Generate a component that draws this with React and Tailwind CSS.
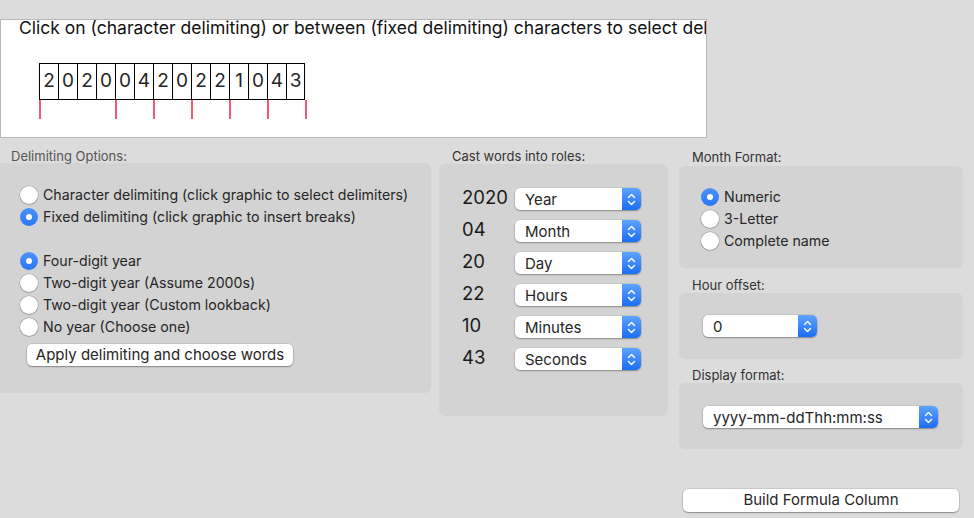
import React from "react";

const digits = "20200420221043".split("");
const ticks = [0, 4, 6, 8, 10, 12, 14];

function Radio({ on }) {
  if (on)
    return (
      <span className="flex h-[18px] w-[18px] shrink-0 items-center justify-center rounded-full bg-gradient-to-b from-[#4b93fb] to-[#2a76f4]">
        <span className="h-[6px] w-[6px] rounded-full bg-white" />
      </span>
    );
  return (
    <span className="h-[18px] w-[18px] shrink-0 rounded-full bg-white shadow-[0_0_0_0.5px_rgba(0,0,0,0.22),0_0.5px_1.5px_rgba(0,0,0,0.25)]" />
  );
}

function RadioRow({ on, children }) {
  return (
    <div className="flex h-[22px] items-center gap-[5px]">
      <Radio on={on} />
      <span className="text-[14.2px] text-[#262626]">{children}</span>
    </div>
  );
}

function Chevrons() {
  return (
    <svg width="9" height="15" viewBox="0 0 9 15" fill="none">
      <path d="M1.5 5.5 L4.5 2.5 L7.5 5.5" stroke="white" strokeWidth="1.4" strokeLinecap="round" strokeLinejoin="round" />
      <path d="M1.5 9.5 L4.5 12.5 L7.5 9.5" stroke="white" strokeWidth="1.4" strokeLinecap="round" strokeLinejoin="round" />
    </svg>
  );
}

function Popup({ value, className }) {
  return (
    <div className={"flex h-[22px] overflow-hidden rounded-[5px] bg-white shadow-[0_0_0_0.5px_rgba(0,0,0,0.12),0_1px_1.5px_rgba(0,0,0,0.3)] " + className}>
      <div className="flex-1 pl-[10px] text-[15px] leading-[23px] text-[#262626]">{value}</div>
      <div className="flex w-[19px] items-center justify-center bg-gradient-to-b from-[#5ea3fd] to-[#1b6cf4]">
        <Chevrons />
      </div>
    </div>
  );
}

function Label({ children, className }) {
  return <div className={"h-[16px] text-[13px] leading-[16px] " + className}>{children}</div>;
}

export default function App() {
  const roles = [
    ["2020", "Year"],
    ["04", "Month"],
    ["20", "Day"],
    ["22", "Hours"],
    ["10", "Minutes"],
    ["43", "Seconds"],
  ];

  return (
    <div className="h-[518px] w-[974px] overflow-hidden bg-[#dcdcdc] font-['Inter','Noto_Sans',sans-serif] text-[#262626]">
      <div className="mt-[19px] h-[119px] w-[707px] overflow-hidden border border-[#b8b8b8] bg-white">
        <div className="whitespace-nowrap pl-[18px] text-[17.5px] leading-[16px] text-[#111]">
          Click on (character delimiting) or between (fixed delimiting) characters to select delimiters
        </div>
        <div className="mt-[27px] pl-[38px]">
          <div className="flex">
            {digits.map((d, i) => (
              <div
                key={i}
                className="flex h-[37px] w-[19px] items-center justify-center border-y border-l border-black text-[19px] last:border-r"
              >
                {d}
              </div>
            ))}
          </div>
          <div className="flex h-[19px] w-[270px]">
            {ticks.map((t, i) => (
              <div key={t} className={"h-full w-[2px] bg-[#f9566f] " + (i === 0 ? "" : i === 1 ? "ml-[74px]" : "ml-[36px]")} />
            ))}
          </div>
        </div>
      </div>

      <div className="mt-[10px] flex items-start">
        <div className="w-[431px]">
          <Label className="pl-[11px] text-[#555]">Delimiting Options:</Label>
          <div className="mt-[-1px] h-[230px] rounded-r-md bg-[#d3d3d3] pl-[20px] pt-[21px]">
            <RadioRow>Character delimiting (click graphic to select delimiters)</RadioRow>
            <RadioRow on>Fixed delimiting (click graphic to insert breaks)</RadioRow>
            <div className="h-[22px]" />
            <RadioRow on>Four-digit year</RadioRow>
            <RadioRow>Two-digit year (Assume 2000s)</RadioRow>
            <RadioRow>Two-digit year (Custom lookback)</RadioRow>
            <RadioRow>No year (Choose one)</RadioRow>
            <button className="ml-[7px] mt-[6px] h-[22px] w-[266px] rounded-[5px] bg-white text-[15px] text-[#262626] shadow-[0_0_0_0.5px_rgba(0,0,0,0.15),0_1px_1.5px_rgba(0,0,0,0.3)]">
              Apply delimiting and choose words
            </button>
          </div>
        </div>

        <div className="ml-[8px] w-[229px]">
          <Label className="pl-[13px] text-[#333]">Cast words into roles:</Label>
          <div className="flex h-[252px] flex-col gap-[10px] rounded-md bg-[#d3d3d3] pl-[23px] pt-[24px]">
            {roles.map(([n, r]) => (
              <div key={n} className="flex h-[22px] items-center">
                <div className="mt-[-3px] w-[53px] text-[18.5px] text-[#1a1a1a]">{n}</div>
                <Popup value={r} className="w-[126px]" />
              </div>
            ))}
          </div>
        </div>

        <div className="ml-[11px] w-[284px] pt-[1px]">
          <Label className="pl-[13px] text-[#333]">Month Format:</Label>
          <div className="mt-[1px] h-[102px] rounded-md bg-[#d3d3d3] pl-[22px] pt-[20px]">
            <RadioRow on>Numeric</RadioRow>
            <RadioRow>3-Letter</RadioRow>
            <RadioRow>Complete name</RadioRow>
          </div>
          <Label className="mt-[9px] pl-[13px] text-[#333]">Hour offset:</Label>
          <div className="h-[66px] rounded-md bg-[#d3d3d3] pl-[24px] pt-[22px]">
            <Popup value="0" className="w-[114px]" />
          </div>
          <Label className="mt-[8px] pl-[13px] text-[#333]">Display format:</Label>
          <div className="h-[66px] rounded-md bg-[#d3d3d3] pl-[24px] pt-[23px]">
            <Popup value="yyyy-mm-ddThh:mm:ss" className="w-[235px]" />
          </div>
          <button className="ml-[4px] mt-[40px] h-[23px] w-[276px] rounded-[5px] bg-white text-[15px] text-[#262626] shadow-[0_0_0_0.5px_rgba(0,0,0,0.15),0_1px_1.5px_rgba(0,0,0,0.3)]">
            Build Formula Column
          </button>
        </div>
      </div>
    </div>
  );
}
